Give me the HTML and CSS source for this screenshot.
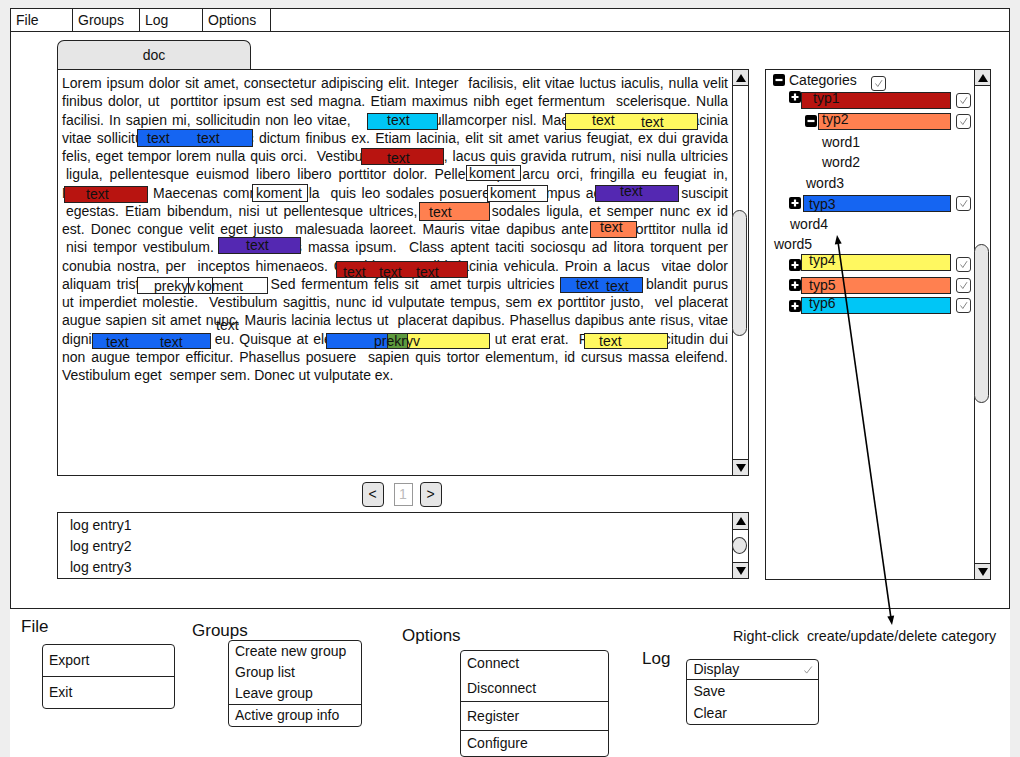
FILE: index.html
```html
<!DOCTYPE html>
<html lang="en">
<head>
    <meta charset="UTF-8">
    <title>Annotator mockup</title>
    <link rel="stylesheet" href="styles.css">
</head>
<body>
<div class="page">
    <div class="window">
        <div class="menubar">
            <div class="m-file">File</div>
            <div class="m-groups">Groups</div>
            <div class="m-log">Log</div>
            <div class="m-options">Options</div>
        </div>
        <div class="wbody">
            <div class="left">
                <div class="tab">doc</div>
                <div class="doc">
                    <div class="doc-text">
                        <div class="ln">Lorem ipsum dolor sit amet, consectetur adipiscing elit. Integer&nbsp; facilisis, elit vitae luctus iaculis, nulla velit</div>
                        <div class="ln">finibus dolor, ut&nbsp; porttitor ipsum est sed magna. Etiam maximus nibh eget fermentum&nbsp; scelerisque. Nulla</div>
                        <div class="ln">facilisi. In sapien mi, sollicitudin non leo vitae,&nbsp;&nbsp;&nbsp; sed nunc ullamcorper nisl. Maecenas tincidunt mi lacinia</div>
                        <div class="ln">vitae sollicitudin metus a nunc dictum finibus ex. Etiam lacinia, elit sit amet varius feugiat, ex dui gravida</div>
                        <div class="ln">felis, eget tempor lorem nulla quis orci.&nbsp; Vestibulum sed nibh, lacus quis gravida rutrum, nisi nulla ultricies</div>
                        <div class="ln ind">ligula, pellentesque euismod libero libero porttitor dolor. Pellentesque arcu orci, fringilla eu feugiat in,</div>
                        <div class="ln">Proin a turpis Maecenas commodo nulla&nbsp; quis leo sodales posuere, vitae tempus ac lorem vitae suscipit</div>
                        <div class="ln ind">egestas. Etiam bibendum, nisi ut pellentesque ultrices, vel metus sodales ligula, et semper nunc ex id</div>
                        <div class="ln">est. Donec congue velit eget justo&nbsp; malesuada laoreet. Mauris vitae dapibus ante eget porttitor nulla id</div>
                        <div class="ln ind">nisi tempor vestibulum. Sed ut lacus massa ipsum.&nbsp; Class aptent taciti sociosqu ad litora torquent per</div>
                        <div class="ln">conubia nostra, per&nbsp; inceptos himenaeos. Curabitur nec nibh lacinia vehicula. Proin a lacus&nbsp; vitae dolor</div>
                        <div class="ln">aliquam tristique, nec lacus est. Sed fermentum felis sit&nbsp; amet turpis ultricies sed dui eget blandit purus</div>
                        <div class="ln">ut imperdiet molestie.&nbsp; Vestibulum sagittis, nunc id vulputate tempus, sem ex porttitor justo,&nbsp; vel placerat</div>
                        <div class="ln">augue sapien sit amet nunc. Mauris lacinia lectus ut&nbsp; placerat dapibus. Phasellus dapibus ante risus, vitae</div>
                        <div class="ln">dignissim magna lectus eu. Quisque at eleifend nunc, vitae lacus id ut erat erat.&nbsp; Praesent sollicitudin dui</div>
                        <div class="ln">non augue tempor efficitur. Phasellus posuere&nbsp; sapien quis tortor elementum, id cursus massa eleifend.</div>
                        <div class="ln last">Vestibulum eget&nbsp; semper sem. Donec ut vulputate ex.</div>
                    </div>

                    <!-- highlights over the text -->
                    <div class="hl cyan" style="left:309px;top:43px;width:71px;height:17px"></div>
                    <div class="hl blue" style="left:79px;top:59px;width:116px;height:18px"></div>
                    <div class="hl red" style="left:303px;top:78px;width:83px;height:17px"></div>
                    <div class="hl red" style="left:6px;top:116px;width:84px;height:17px"></div>
                    <div class="hl note" style="left:194px;top:114px;width:56px;height:18px"></div>
                    <div class="hl yellow" style="left:507px;top:43px;width:133px;height:17px"></div>
                    <div class="hl note" style="left:408px;top:95px;width:55px;height:16px"></div>
                    <div class="hl note" style="left:429px;top:115px;width:61px;height:17px"></div>
                    <div class="hl purple" style="left:537px;top:115px;width:84px;height:17px"></div>
                    <div class="hl orange" style="left:361px;top:132px;width:71px;height:19px"></div>
                    <div class="hl orange" style="left:532px;top:151px;width:47px;height:17px"></div>
                    <div class="hl purple" style="left:160px;top:167px;width:83px;height:17px"></div>
                    <div class="hl red" style="left:278px;top:191px;width:132px;height:17px"></div>
                    <div class="hl note" style="left:79px;top:207px;width:76px;height:17px"></div>
                    <div class="hl note" style="left:130px;top:207px;width:80px;height:17px"></div>
                    <div class="hl frame" style="left:79px;top:207px;width:76px;height:17px"></div>
                    <div class="hl blue" style="left:502px;top:207px;width:83px;height:16px"></div>
                    <div class="hl blue" style="left:34px;top:263px;width:119px;height:16px"></div>
                    <div class="hl blue" style="left:268px;top:263px;width:62px;height:16px"></div>
                    <div class="hl green" style="left:329px;top:263px;width:21px;height:16px"></div>
                    <div class="hl yellow" style="left:349px;top:263px;width:83px;height:16px"></div>
                    <div class="hl yellow" style="left:526px;top:263px;width:84px;height:16px"></div>

                    <span class="lbl" style="left:329px;top:42px">text</span>
                    <span class="lbl" style="left:89px;top:60px">text</span>
                    <span class="lbl" style="left:139px;top:60px">text</span>
                    <span class="lbl" style="left:329px;top:80px">text</span>
                    <span class="lbl" style="left:28px;top:116px">text</span>
                    <span class="lbl" style="left:198px;top:115px">koment</span>
                    <span class="lbl" style="left:534px;top:42px">text</span>
                    <span class="lbl" style="left:583px;top:44px">text</span>
                    <span class="lbl" style="left:411px;top:95px">koment</span>
                    <span class="lbl" style="left:432px;top:115px">koment</span>
                    <span class="lbl" style="left:562px;top:113px">text</span>
                    <span class="lbl" style="left:371px;top:134px">text</span>
                    <span class="lbl" style="left:542px;top:149px">text</span>
                    <span class="lbl" style="left:188px;top:167px">text</span>
                    <span class="lbl" style="left:285px;top:194px">text</span>
                    <span class="lbl" style="left:321px;top:194px">text</span>
                    <span class="lbl" style="left:358px;top:194px">text</span>
                    <span class="lbl" style="left:96px;top:208px">prekyv</span>
                    <span class="lbl" style="left:139px;top:208px">koment</span>
                    <span class="lbl" style="left:518px;top:206px">text</span>
                    <span class="lbl" style="left:548px;top:208px">text</span>
                    <span class="lbl" style="left:158px;top:247px">text</span>
                    <span class="lbl" style="left:48px;top:264px">text</span>
                    <span class="lbl" style="left:102px;top:264px">text</span>
                    <span class="lbl" style="left:316px;top:263px">prekryv</span>
                    <span class="lbl" style="left:541px;top:263px">text</span>

                    <div class="sbar">
                        <div class="sb-up"><svg viewBox="0 0 10 8"><polygon points="5,0 10,8 0,8"/></svg></div>
                        <div class="sb-track"><div class="thumb doc-thumb"></div></div>
                        <div class="sb-down"><svg viewBox="0 0 10 8"><polygon points="0,0 10,0 5,8"/></svg></div>
                    </div>
                </div>

                <div class="pager">
                    <div class="pbtn">&lt;</div>
                    <div class="pnum">1</div>
                    <div class="pbtn">&gt;</div>
                </div>

                <div class="log">
                    <div class="log-list">
                        <div>log entry1</div>
                        <div>log entry2</div>
                        <div>log entry3</div>
                    </div>
                    <div class="sbar">
                        <div class="sb-up tall"><svg viewBox="0 0 10 8"><polygon points="5,0 10,8 0,8"/></svg></div>
                        <div class="sb-track"><div class="knob"></div></div>
                        <div class="sb-down"><svg viewBox="0 0 10 8"><polygon points="0,0 10,0 5,8"/></svg></div>
                    </div>
                </div>
            </div>

            <div class="tree">
                <div class="tree-list">
                    <div class="row cat">
                        <svg class="tog" viewBox="0 0 12 12"><rect width="12" height="12" rx="2"/><path d="M2.5 6h7" stroke="#fff" stroke-width="2.2"/></svg>
                        <span class="cat-name">Categories</span>
                        <span class="chk"><svg viewBox="0 0 13 13"><path d="M3.5 6.5l2.3 3L10 3.2" fill="none" stroke="#777" stroke-width="0.9"/></svg></span>
                    </div>
                    <div class="row lvl1">
                        <svg class="tog raise" viewBox="0 0 12 12"><rect width="12" height="12" rx="2"/><path d="M2.5 6h7M6 2.5v7" stroke="#fff" stroke-width="2.2"/></svg>
                        <div class="bar red"><span class="blbl p11 lift">typ1</span></div>
                        <span class="chk"><svg viewBox="0 0 13 13"><path d="M3.5 6.5l2.3 3L10 3.2" fill="none" stroke="#777" stroke-width="0.9"/></svg></span>
                    </div>
                    <div class="row lvl2">
                        <svg class="tog" viewBox="0 0 12 12"><rect width="12" height="12" rx="2"/><path d="M2.5 6h7" stroke="#fff" stroke-width="2.2"/></svg>
                        <div class="bar orange gap1"><span class="blbl p3 lift">typ2</span></div>
                        <span class="chk"><svg viewBox="0 0 13 13"><path d="M3.5 6.5l2.3 3L10 3.2" fill="none" stroke="#777" stroke-width="0.9"/></svg></span>
                    </div>
                    <div class="row w-deep">word1</div>
                    <div class="row w-deep">word2</div>
                    <div class="row w-mid">word3</div>
                    <div class="row lvl1">
                        <svg class="tog" viewBox="0 0 12 12"><rect width="12" height="12" rx="2"/><path d="M2.5 6h7M6 2.5v7" stroke="#fff" stroke-width="2.2"/></svg>
                        <div class="bar blue gap2"><span class="blbl p5 drop">typ3</span></div>
                        <span class="chk"><svg viewBox="0 0 13 13"><path d="M3.5 6.5l2.3 3L10 3.2" fill="none" stroke="#777" stroke-width="0.9"/></svg></span>
                    </div>
                    <div class="row w-low">word4</div>
                    <div class="row w-top">word5</div>
                    <div class="row lvl1">
                        <svg class="tog" viewBox="0 0 12 12"><rect width="12" height="12" rx="2"/><path d="M2.5 6h7M6 2.5v7" stroke="#fff" stroke-width="2.2"/></svg>
                        <div class="bar yellow raise-bar"><span class="blbl p7 lift">typ4</span></div>
                        <span class="chk"><svg viewBox="0 0 13 13"><path d="M3.5 6.5l2.3 3L10 3.2" fill="none" stroke="#777" stroke-width="0.9"/></svg></span>
                    </div>
                    <div class="row lvl1">
                        <svg class="tog" viewBox="0 0 12 12"><rect width="12" height="12" rx="2"/><path d="M2.5 6h7M6 2.5v7" stroke="#fff" stroke-width="2.2"/></svg>
                        <div class="bar orange"><span class="blbl p7">typ5</span></div>
                        <span class="chk"><svg viewBox="0 0 13 13"><path d="M3.5 6.5l2.3 3L10 3.2" fill="none" stroke="#777" stroke-width="0.9"/></svg></span>
                    </div>
                    <div class="row lvl1">
                        <svg class="tog" viewBox="0 0 12 12"><rect width="12" height="12" rx="2"/><path d="M2.5 6h7M6 2.5v7" stroke="#fff" stroke-width="2.2"/></svg>
                        <div class="bar cyan"><span class="blbl p7 lift">typ6</span></div>
                        <span class="chk"><svg viewBox="0 0 13 13"><path d="M3.5 6.5l2.3 3L10 3.2" fill="none" stroke="#777" stroke-width="0.9"/></svg></span>
                    </div>
                </div>
                <div class="sbar">
                    <div class="sb-up"><svg viewBox="0 0 10 8"><polygon points="5,0 10,8 0,8"/></svg></div>
                    <div class="sb-track"><div class="thumb tree-thumb"></div></div>
                    <div class="sb-down"><svg viewBox="0 0 10 8"><polygon points="0,0 10,0 5,8"/></svg></div>
                </div>
            </div>
        </div>
    </div>

    <div class="bottom">
        <div class="grp grp-file">
            <div class="glabel">File</div>
            <div class="menu menu-file">
                <div class="mi sep">Export</div>
                <div class="mi">Exit</div>
            </div>
        </div>
        <div class="grp grp-groups">
            <div class="glabel">Groups</div>
            <div class="menu menu-groups">
                <div class="mi">Create new group</div>
                <div class="mi">Group list</div>
                <div class="mi sep">Leave group</div>
                <div class="mi">Active group info</div>
            </div>
        </div>
        <div class="grp grp-options">
            <div class="glabel">Options</div>
            <div class="menu menu-options">
                <div class="mi o1">Connect</div>
                <div class="mi o2 sep">Disconnect</div>
                <div class="mi o3 sep">Register</div>
                <div class="mi o4">Configure</div>
            </div>
        </div>
        <div class="grp grp-log">
            <div class="hint">Right-click  create/update/delete category</div>
            <div class="log-row">
                <div class="glabel">Log</div>
                <div class="menu menu-log">
                    <div class="mi l1 sep">Display<svg class="tick" viewBox="0 0 10 10"><path d="M1.5 5.5l2.2 2.6L8.8 1.5" fill="none" stroke="#888" stroke-width="0.9"/></svg></div>
                    <div class="mi l2">Save</div>
                    <div class="mi l2">Clear</div>
                </div>
            </div>
        </div>
    </div>

    <!-- callout from the tree to the right-click note -->
    <svg class="callout" width="1000" height="757" viewBox="0 0 1000 757">
        <line x1="828.3" y1="243.9" x2="880.7" y2="616.1" stroke="#000" stroke-width="1.6"/>
        <polygon points="827,235 824.8,244.4 831.7,243.4"/>
        <polygon points="882,625 877.3,616.6 884.2,615.6"/>
    </svg>
</div>
</body>
</html>
```

FILE: styles.css
```css
body {
    margin: 0;
    background-color: #eeeeee;
    font-family: "Liberation Sans", Arial, sans-serif;
    font-size: 14px;
    color: #111;
}
.page {
    position: relative;
    width: 1000px;
    margin-left: 10px;
    padding-top: 8px;
}
.window {
    height: 601px;
    box-sizing: border-box;
    border: 1px solid #222;
    background-color: #fff;
}
.menubar {
    display: flex;
    height: 23px;
    box-sizing: border-box;
    border-bottom: 1px solid #222;
}
.menubar div {
    box-sizing: border-box;
    border-right: 1px solid #222;
    padding: 1px 0 0 5px;
    line-height: 21px;
}
.m-file { width: 62px; }
.m-groups { width: 67px; }
.m-log { width: 63px; }
.m-options { width: 68px; }
.wbody {
    display: flex;
    align-items: flex-start;
    padding: 8px 0 0 46px;
}
.left {
    width: 692px;
}
.tab {
    width: 194px;
    height: 29px;
    box-sizing: border-box;
    border: 1px solid #222;
    border-bottom: none;
    border-radius: 7px 7px 0 0;
    background-color: #e6e6e6;
    text-align: center;
    line-height: 29px;
}
.doc {
    position: relative;
    display: flex;
    height: 407px;
    box-sizing: border-box;
    border: 1px solid #222;
}
.doc-text {
    flex: 1;
    padding: 4px 4px 0 4px;
    line-height: 18.25px;
}
.ln {
    text-align: justify;
    text-align-last: justify;
}
.ln.ind {
    padding-left: 4px;
}
.ln.last {
    text-align-last: left;
}
.hl {
    position: absolute;
    box-sizing: border-box;
    border: 1px solid #222;
}
.note { background-color: #fff; }
.frame { background: none; }
.red { background-color: #b81410; }
.orange { background-color: #ff8050; }
.cyan { background-color: #00c6f6; }
.blue { background-color: #1565f2; }
.yellow { background-color: #fff860; }
.purple { background-color: #5428b2; }
.green { background-color: #5e9a3e; }
.lbl {
    position: absolute;
    line-height: 16px;
    white-space: nowrap;
    color: #111;
}

/* scrollbars */
.sbar {
    width: 15px;
    flex: none;
    border-left: 1px solid #222;
    display: flex;
    flex-direction: column;
}
.sb-up, .sb-down {
    height: 16px;
    box-sizing: border-box;
    background-color: #e6e6e6;
    display: flex;
    align-items: center;
    justify-content: center;
}
.sb-up { border-bottom: 1px solid #222; }
.sb-up.tall { height: 17px; }
.sb-down { border-top: 1px solid #222; }
.sb-up svg, .sb-down svg {
    width: 10px;
    height: 8px;
}
.sb-track {
    flex: 1;
}
.thumb {
    width: 15px;
    margin-left: -1px;
    box-sizing: border-box;
    border: 1px solid #333;
    border-radius: 8px;
    background-color: #e6e6e6;
}
.doc-thumb {
    margin-top: 124px;
    height: 126px;
}
.tree-thumb {
    margin-top: 158px;
    height: 159px;
}
.knob {
    width: 15px;
    height: 17px;
    margin: 7px 0 0 -1px;
    box-sizing: border-box;
    border: 1px solid #333;
    border-radius: 50%;
    background-color: #e6e6e6;
}

/* pager + log */
.pager {
    display: flex;
    justify-content: center;
    padding-right: 3px;
    margin-top: 6px;
}
.pbtn {
    width: 22px;
    height: 25px;
    box-sizing: border-box;
    border: 1px solid #222;
    border-radius: 4px;
    background-color: #e6e6e6;
    text-align: center;
    line-height: 23px;
}
.pnum {
    width: 19px;
    height: 23px;
    margin: 1px 7px 0 10px;
    box-sizing: border-box;
    border: 1px solid #999;
    color: #bbb;
    text-align: center;
    line-height: 21px;
}
.log {
    display: flex;
    height: 67px;
    margin-top: 5px;
    box-sizing: border-box;
    border: 1px solid #222;
}
.log-list {
    flex: 1;
    padding: 2px 0 0 12px;
    line-height: 21px;
}

/* category tree */
.tree {
    display: flex;
    width: 226px;
    height: 511px;
    margin: 29px 0 0 16px;
    box-sizing: border-box;
    border: 1px solid #222;
}
.tree-list {
    flex: 1;
    padding-right: 3px;
}
.row {
    display: flex;
    align-items: center;
    height: 20.5px;
}
.row.cat { padding-left: 7px; }
.row.lvl1 { padding-left: 23px; }
.row.lvl2 { padding-left: 39px; }
.row.w-deep { padding-left: 56px; }
.row.w-mid { padding-left: 40px; }
.row.w-low { padding-left: 24px; }
.row.w-top { padding-left: 8px; }
.tog {
    width: 12px;
    height: 12px;
    flex: none;
}
.tog.raise { margin-bottom: 7px; }
.cat-name { margin-left: 4px; }
.cat .chk {
    margin-left: 14px;
    align-self: flex-end;
}
.bar {
    flex: 1;
    height: 17px;
    box-sizing: border-box;
    border: 1px solid #222;
    line-height: 15px;
}
.bar.gap1 { margin-left: 1px; }
.bar.gap2 { margin-left: 2px; }
.bar.raise-bar { margin-bottom: 4px; }
.blbl { display: block; }
.blbl.p3 { padding-left: 3px; }
.blbl.p5 { padding-left: 5px; }
.blbl.p7 { padding-left: 7px; }
.blbl.p11 { padding-left: 11px; }
.blbl.lift { margin-top: -2px; }
.blbl.drop { margin-top: 1px; }
.chk {
    width: 15px;
    height: 15px;
    flex: none;
    margin-left: 5px;
    box-sizing: border-box;
    border: 1px solid #333;
    border-radius: 3px;
    background-color: #fff;
}
.chk svg {
    display: block;
    width: 13px;
    height: 13px;
}

/* menu sketches below the window */
.bottom {
    display: flex;
    align-items: flex-start;
    height: 148px;
    background-color: #fff;
}
.glabel {
    font-size: 17px;
    line-height: 20px;
}
.menu {
    box-sizing: border-box;
    border: 1px solid #222;
    border-radius: 4px;
    background-color: #fff;
}
.mi {
    padding-left: 6px;
    line-height: 21px;
}
.mi.sep { border-bottom: 1px solid #222; }
.grp-file {
    margin: 8px 0 0 11px;
}
.menu-file {
    width: 133px;
    margin: 7px 0 0 21px;
}
.menu-file .mi { line-height: 31px; }
.grp-groups {
    margin: 12px 0 0 17px;
}
.menu-groups {
    width: 134px;
    margin: -1px 0 0 36px;
}
.grp-options {
    margin: 17px 0 0 40px;
}
.menu-options {
    width: 149px;
    margin: 4px 0 0 58px;
}
.menu-options .o1 { line-height: 24px; }
.menu-options .o2 { line-height: 26px; }
.menu-options .o3 { line-height: 28px; }
.menu-options .o4 { line-height: 25px; }
.grp-log {
    margin: 19px 0 0 33px;
}
.hint {
    margin-left: 91px;
    font-size: 14.3px;
    line-height: 16px;
    white-space: pre;
}
.log-row {
    display: flex;
    align-items: flex-start;
}
.log-row .glabel { margin-top: 5px; }
.menu-log {
    width: 133px;
    margin: 15px 0 0 16px;
}
.menu-log .l1 {
    display: flex;
    justify-content: space-between;
    align-items: center;
    padding-right: 5px;
    line-height: 19px;
}
.menu-log .l2 { line-height: 22px; }
.tick {
    width: 10px;
    height: 10px;
}
.callout {
    position: absolute;
    left: 0;
    top: 0;
    pointer-events: none;
}
```
